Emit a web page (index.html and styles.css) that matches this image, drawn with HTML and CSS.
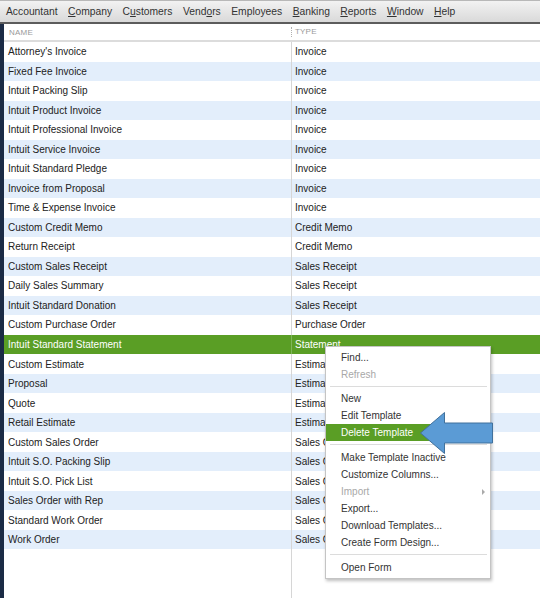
FILE: index.html
```html
<!DOCTYPE html>
<html>
<head>
<meta charset="utf-8">
<link rel="stylesheet" href="styles.css">
</head>
<body>
<div class="app">
  <div class="menubar">
    <span class="mi">Accountant</span>
    <span class="mi"><u>C</u>ompany</span>
    <span class="mi">C<u>u</u>stomers</span>
    <span class="mi">Vend<u>o</u>rs</span>
    <span class="mi">Employees</span>
    <span class="mi"><u>B</u>anking</span>
    <span class="mi"><u>R</u>eports</span>
    <span class="mi"><u>W</u>indow</span>
    <span class="mi"><u>H</u>elp</span>
  </div>
  <div class="main">
    <div class="strip"></div>
    <div class="list">
      <div class="header">
        <div class="hc">NAME</div>
        <div class="hc hc2">TYPE</div>
      </div>
      <div class="rows">
        <div class="row"><div class="c1">Attorney's Invoice</div><div class="c2">Invoice</div></div>
        <div class="row alt"><div class="c1">Fixed Fee Invoice</div><div class="c2">Invoice</div></div>
        <div class="row"><div class="c1">Intuit Packing Slip</div><div class="c2">Invoice</div></div>
        <div class="row alt"><div class="c1">Intuit Product Invoice</div><div class="c2">Invoice</div></div>
        <div class="row"><div class="c1">Intuit Professional Invoice</div><div class="c2">Invoice</div></div>
        <div class="row alt"><div class="c1">Intuit Service Invoice</div><div class="c2">Invoice</div></div>
        <div class="row"><div class="c1">Intuit Standard Pledge</div><div class="c2">Invoice</div></div>
        <div class="row alt"><div class="c1">Invoice from Proposal</div><div class="c2">Invoice</div></div>
        <div class="row"><div class="c1">Time &amp; Expense Invoice</div><div class="c2">Invoice</div></div>
        <div class="row alt"><div class="c1">Custom Credit Memo</div><div class="c2">Credit Memo</div></div>
        <div class="row"><div class="c1">Return Receipt</div><div class="c2">Credit Memo</div></div>
        <div class="row alt"><div class="c1">Custom Sales Receipt</div><div class="c2">Sales Receipt</div></div>
        <div class="row"><div class="c1">Daily Sales Summary</div><div class="c2">Sales Receipt</div></div>
        <div class="row alt"><div class="c1">Intuit Standard Donation</div><div class="c2">Sales Receipt</div></div>
        <div class="row"><div class="c1">Custom Purchase Order</div><div class="c2">Purchase Order</div></div>
        <div class="row sel"><div class="c1">Intuit Standard Statement</div><div class="c2">Statement</div></div>
        <div class="row"><div class="c1">Custom Estimate</div><div class="c2">Estimate</div></div>
        <div class="row alt"><div class="c1">Proposal</div><div class="c2">Estimate</div></div>
        <div class="row"><div class="c1">Quote</div><div class="c2">Estimate</div></div>
        <div class="row alt"><div class="c1">Retail Estimate</div><div class="c2">Estimate</div></div>
        <div class="row"><div class="c1">Custom Sales Order</div><div class="c2">Sales Order</div></div>
        <div class="row alt"><div class="c1">Intuit S.O. Packing Slip</div><div class="c2">Sales Order</div></div>
        <div class="row"><div class="c1">Intuit S.O. Pick List</div><div class="c2">Sales Order</div></div>
        <div class="row alt"><div class="c1">Sales Order with Rep</div><div class="c2">Sales Order</div></div>
        <div class="row"><div class="c1">Standard Work Order</div><div class="c2">Sales Order</div></div>
        <div class="row alt"><div class="c1">Work Order</div><div class="c2">Sales Order</div></div>
        <div class="row filler"><div class="c1"></div><div class="c2"></div></div>
      </div>
    </div>
  </div>

  <div class="ctx">
    <div class="item">Find...</div>
    <div class="item dis">Refresh</div>
    <div class="sep sep-first"></div>
    <div class="item">New</div>
    <div class="item">Edit Template</div>
    <div class="item hl">Delete Template</div>
    <div class="sep"></div>
    <div class="item">Make Template Inactive</div>
    <div class="item">Customize Columns...</div>
    <div class="item dis sub">Import<span class="subarrow"></span></div>
    <div class="item">Export...</div>
    <div class="item">Download Templates...</div>
    <div class="item">Create Form Design...</div>
    <div class="sep"></div>
    <div class="item">Open Form</div>
  </div>

  <svg class="arrow" width="84" height="50" viewBox="0 0 84 50">
    <polygon points="5.5,25 29.5,4.5 29.5,15 77.5,15 77.5,35 29.5,35 29.5,45.5" fill="#5b9bd5" stroke="#41719c" stroke-width="1"/>
  </svg>
</div>
</body>
</html>
```

FILE: styles.css
```css
html, body {
  margin: 0;
  padding: 0;
  background: #ffffff;
}
.app {
  position: relative;
  width: 540px;
  height: 598px;
  overflow: hidden;
  font-family: "Liberation Sans", Arial, sans-serif;
  font-size: 10px;
  color: #222;
}
.menubar {
  height: 21px;
  border-top: 1px solid #b8b8b8;
  border-bottom: 2px solid #5c5c5c;
  background: linear-gradient(#f2f2f2, #d9d9d9);
  display: flex;
  align-items: center;
  padding-left: 3px;
  box-sizing: content-box;
}
.mi {
  color: #333;
  font-size: 10.3px;
  padding: 0 3px;
  margin-right: 4.5px;
  white-space: nowrap;
}
.mi u {
  text-decoration: underline;
  text-underline-offset: 1px;
}
.main {
  display: flex;
  height: 574px;
}
.strip {
  width: 4px;
  background: #1b2b45;
  flex: none;
}
.list {
  flex: 1;
  display: flex;
  flex-direction: column;
}
.header {
  display: grid;
  grid-template-columns: 287px 1fr;
  height: 16px;
  border-bottom: 2px solid #dcdcdc;
  align-items: center;
}
.hc {
  font-size: 8px;
  color: #9a9a9a;
  padding-left: 5px;
  letter-spacing: 0.2px;
}
.hc2 {
  border-left: 1px dotted #b0b0b0;
  padding-left: 3px;
  height: 10px;
  line-height: 10px;
}
.rows {
  flex: 1;
  display: flex;
  flex-direction: column;
}
.row {
  display: grid;
  grid-template-columns: 287px 1fr;
  height: 19.52px;
  align-items: stretch;
  flex: none;
}
.row.filler {
  flex: 1;
}
.c1 {
  padding-left: 4px;
  display: flex;
  align-items: center;
  white-space: nowrap;
}
.c2 {
  border-left: 1px solid #d6d6d6;
  padding-left: 3px;
  display: flex;
  align-items: center;
  white-space: nowrap;
}
.row.alt {
  background: #e3eefb;
}
.row.sel {
  background: #5a9e25;
  color: #ffffff;
}
.row.sel .c2 {
  border-left-color: #7fb55a;
}
.ctx {
  position: absolute;
  left: 325px;
  top: 346px;
  width: 164px;
  padding: 2px 0;
  background: #ffffff;
  border: 1px solid #c4c4c4;
  box-shadow: 1px 2px 3px rgba(0,0,0,0.25);
}
.item {
  height: 17px;
  line-height: 17px;
  padding-left: 15px;
  color: #333;
  font-size: 10px;
  position: relative;
  white-space: nowrap;
}
.item.dis {
  color: #a8a8a8;
}
.item.hl {
  background: #5a9e25;
  color: #ffffff;
  margin-right: 2px;
}
.sep {
  height: 1px;
  background: #dcdcdc;
  margin: 3px 3px 4px 4px;
}
.sep.sep-first {
  margin-bottom: 3px;
}
.subarrow {
  position: absolute;
  right: 5px;
  top: 6px;
  width: 0;
  height: 0;
  border-top: 3px solid transparent;
  border-bottom: 3px solid transparent;
  border-left: 3px solid #aaaaaa;
}
.arrow {
  position: absolute;
  left: 415px;
  top: 408px;
}
```
